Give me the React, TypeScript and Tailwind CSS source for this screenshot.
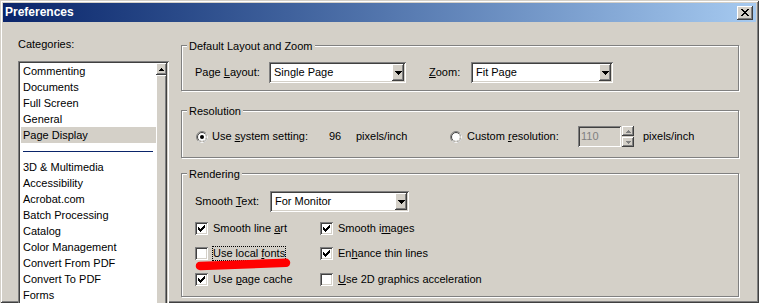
import React from "react";

// classic 3D bevels
const sunken =
  "shadow-[inset_1px_1px_0_#808080,inset_-1px_-1px_0_#ffffff,inset_2px_2px_0_#404040,inset_-2px_-2px_0_#d4d0c8]";
const raised =
  "shadow-[inset_-1px_-1px_0_#404040,inset_1px_1px_0_#ffffff,inset_-2px_-2px_0_#808080]";
const etched = "border border-[#808080] shadow-[inset_1px_1px_0_#ffffff,1px_1px_0_#ffffff]";

function DownArrow() {
  return (
    <svg width="7" height="4" viewBox="0 0 7 4" shapeRendering="crispEdges">
      <rect x="0" y="0" width="7" height="1" fill="#000" />
      <rect x="1" y="1" width="5" height="1" fill="#000" />
      <rect x="2" y="2" width="3" height="1" fill="#000" />
      <rect x="3" y="3" width="1" height="1" fill="#000" />
    </svg>
  );
}

function Combo({ w, value }: { w: string; value: string }) {
  return (
    <div className={`${w} h-[21px] bg-white ${sunken} flex items-center justify-between pl-[5px] pr-[2px] shrink-0`}>
      <span>{value}</span>
      <div className={`w-[12px] h-[17px] bg-[#d4d0c8] ${raised} flex items-center justify-center`}>
        <DownArrow />
      </div>
    </div>
  );
}

function Check({ on }: { on?: boolean }) {
  return (
    <span className={`block w-[13px] h-[13px] bg-white ${sunken} shrink-0`}>
      {on && (
        <svg width="13" height="13" viewBox="0 0 13 13" shapeRendering="crispEdges">
          <rect x="9" y="3" width="1" height="1" fill="#000" />
          <rect x="8" y="4" width="2" height="1" fill="#000" />
          <rect x="3" y="5" width="1" height="1" fill="#000" />
          <rect x="7" y="5" width="3" height="1" fill="#000" />
          <rect x="3" y="6" width="2" height="1" fill="#000" />
          <rect x="6" y="6" width="3" height="1" fill="#000" />
          <rect x="3" y="7" width="5" height="1" fill="#000" />
          <rect x="4" y="8" width="3" height="1" fill="#000" />
          <rect x="5" y="9" width="1" height="1" fill="#000" />
        </svg>
      )}
    </span>
  );
}

function Radio({ on }: { on?: boolean }) {
  return (
    <svg width="12" height="12" viewBox="0 0 12 12" className="shrink-0">
      <circle cx="6" cy="6" r="5.5" fill="none" stroke="#808080" />
      <path d="M9.89 2.11 A5.5 5.5 0 0 1 2.11 9.89" fill="none" stroke="#ffffff" />
      <circle cx="6" cy="6" r="4.5" fill="#ffffff" stroke="#404040" />
      <path d="M9.18 2.82 A4.5 4.5 0 0 1 2.82 9.18" fill="none" stroke="#d4d0c8" />
      {on && <circle cx="6" cy="6" r="2" fill="#000" />}
    </svg>
  );
}

function CheckItem({ on, children, focus }: { on?: boolean; children: React.ReactNode; focus?: boolean }) {
  return (
    <div className="w-[125px] flex items-center">
      <Check on={on} />
      <span className={`ml-[5px] whitespace-nowrap ${focus ? "outline outline-1 outline-dotted outline-black" : ""}`}>
        {children}
      </span>
    </div>
  );
}

function Group({ label, className, children }: { label: string; className: string; children: React.ReactNode }) {
  return (
    <div className={`relative ${etched} ${className}`}>
      <span className="absolute left-[5px] top-[-6px] px-[2px] bg-[#d4d0c8] whitespace-nowrap">{label}</span>
      {children}
    </div>
  );
}

const categories = ["Commenting", "Documents", "Full Screen", "General", "Page Display"];
const more = [
  "3D & Multimedia",
  "Accessibility",
  "Acrobat.com",
  "Batch Processing",
  "Catalog",
  "Color Management",
  "Convert From PDF",
  "Convert To PDF",
  "Forms",
];

export default function App() {
  return (
    <div className="w-[759px] h-[303px] overflow-hidden bg-[#d4d0c8] text-[11px] leading-[13px] text-black font-['Liberation_Sans',Arial,sans-serif] shadow-[inset_1px_1px_0_#d4d0c8,inset_-1px_-1px_0_#404040,inset_2px_2px_0_#ffffff,inset_-2px_-2px_0_#808080]">
      {/* Title bar */}
      <div className="mx-[3px] mt-[3px] h-[19px] bg-linear-to-r from-[#0a246a] to-[#a6caf0] flex items-center justify-between pl-[2px] pr-[3px]">
        <span className="text-white font-bold text-[12px]">Preferences</span>
        <div className={`w-[16px] h-[14px] bg-[#d4d0c8] ${raised} flex items-center justify-center`}>
          <svg width="8" height="7" viewBox="0 0 8 7" shapeRendering="crispEdges">
            <rect x="0" y="0" width="2" height="1" fill="#000" />
            <rect x="6" y="0" width="2" height="1" fill="#000" />
            <rect x="1" y="1" width="2" height="1" fill="#000" />
            <rect x="5" y="1" width="2" height="1" fill="#000" />
            <rect x="2" y="2" width="4" height="1" fill="#000" />
            <rect x="3" y="3" width="2" height="1" fill="#000" />
            <rect x="2" y="4" width="4" height="1" fill="#000" />
            <rect x="1" y="5" width="2" height="1" fill="#000" />
            <rect x="5" y="5" width="2" height="1" fill="#000" />
            <rect x="0" y="6" width="2" height="1" fill="#000" />
            <rect x="6" y="6" width="2" height="1" fill="#000" />
          </svg>
        </div>
      </div>

      <div className="flex pl-[18px]">
        {/* Categories */}
        <div className="w-[151px] pt-[16px] flex flex-col shrink-0">
          <span>Categories:</span>
          <div className={`mt-[10px] h-[250px] bg-white ${sunken} p-[2px] flex`}>
            <div className="flex-1 flex flex-col">
              {categories.map((c) => (
                <div
                  key={c}
                  className={`h-[16px] leading-[16px] ml-[1px] pl-[2px] whitespace-nowrap ${c === "Page Display" ? "bg-[#d4d0c8]" : ""}`}
                >
                  {c}
                </div>
              ))}
              <div className="h-[16px] pt-[8px] pl-[3px]">
                <div className="w-[130px] h-[1px] bg-[#0a246a]" />
              </div>
              {more.map((c) => (
                <div key={c} className="h-[16px] leading-[16px] ml-[1px] pl-[2px] whitespace-nowrap">
                  {c}
                </div>
              ))}
            </div>
            <div className="w-[11px] flex flex-col">
              <div className={`h-[12px] bg-[#d4d0c8] ${raised} flex items-center justify-center`}>
                <svg width="5" height="3" viewBox="0 0 5 3" shapeRendering="crispEdges">
                  <rect x="2" y="0" width="1" height="1" fill="#000" />
                  <rect x="1" y="1" width="3" height="1" fill="#000" />
                  <rect x="0" y="2" width="5" height="1" fill="#000" />
                </svg>
              </div>
              <div className={`flex-1 bg-[#d4d0c8] ${raised}`} />
            </div>
          </div>
        </div>

        {/* Settings */}
        <div className="ml-[12px] w-[558px] pt-[23px] flex flex-col">
          <Group label="Default Layout and Zoom" className="h-[46px] pt-[16px] pl-[13px]">
            <div className="flex items-center h-[21px]">
              <span className="w-[74px] shrink-0">
                Page <u>L</u>ayout:
              </span>
              <Combo w="w-[137px]" value="Single Page" />
              <span className="ml-[23px] w-[42px] shrink-0">
                <u>Z</u>oom:
              </span>
              <Combo w="w-[142px]" value="Fit Page" />
            </div>
          </Group>

          <Group label="Resolution" className="mt-[19px] h-[48px] pt-[15px] pl-[14px]">
            <div className="flex items-center h-[21px] whitespace-nowrap">
              <Radio on />
              <span className="ml-[4px] w-[117px] shrink-0">
                Use <u>s</u>ystem setting:
              </span>
              <span className="w-[27px] shrink-0">96</span>
              <span className="w-[94px] shrink-0">pixels/inch</span>
              <Radio />
              <span className="ml-[5px] w-[111px] shrink-0">
                Custom <u>r</u>esolution:
              </span>
              <div className={`w-[43px] h-[21px] bg-[#d4d0c8] ${sunken} flex items-center pl-[3px] text-[#808080] shrink-0`}>
                110
              </div>
              <div className="ml-[1px] w-[12px] h-[21px] flex flex-col shrink-0">
                <div className={`h-[10px] bg-[#d4d0c8] ${raised} flex items-center justify-center`}>
                  <svg width="5" height="3" viewBox="0 0 5 3" shapeRendering="crispEdges">
                    <rect x="2" y="0" width="1" height="1" fill="#808080" />
                    <rect x="1" y="1" width="3" height="1" fill="#808080" />
                    <rect x="0" y="2" width="5" height="1" fill="#808080" />
                  </svg>
                </div>
                <div className={`mt-[1px] h-[10px] bg-[#d4d0c8] ${raised} flex items-center justify-center`}>
                  <svg width="5" height="3" viewBox="0 0 5 3" shapeRendering="crispEdges">
                    <rect x="0" y="0" width="5" height="1" fill="#808080" />
                    <rect x="1" y="1" width="3" height="1" fill="#808080" />
                    <rect x="2" y="2" width="1" height="1" fill="#808080" />
                  </svg>
                </div>
              </div>
              <span className="ml-[9px]">pixels/inch</span>
            </div>
          </Group>

          <Group label="Rendering" className="mt-[15px] h-[124px] pt-[17px] pl-[13px]">
            <div className="flex items-center h-[21px]">
              <span className="w-[75px] shrink-0">
                Smooth <u>T</u>ext:
              </span>
              <Combo w="w-[139px]" value="For Monitor" />
            </div>
            <div className="mt-[10px] h-[13px] flex">
              <CheckItem on>
                Smooth line <u>a</u>rt
              </CheckItem>
              <CheckItem on>
                Smooth i<u>m</u>ages
              </CheckItem>
            </div>
            <div className="mt-[12px] h-[13px] flex">
              <CheckItem focus>
                Use local <u>f</u>onts
              </CheckItem>
              <CheckItem on>
                En<u>h</u>ance thin lines
              </CheckItem>
            </div>
            <div className="mt-[13px] h-[13px] flex">
              <CheckItem on>
                Use <u>p</u>age cache
              </CheckItem>
              <CheckItem>
                <u>U</u>se 2D graphics acceleration
              </CheckItem>
            </div>

            {/* red hand-drawn mark */}
            <svg className="absolute left-[13px] top-[84px]" width="98" height="14" viewBox="0 0 98 14">
              <path d="M5 8 Q48 6.5 91 4.8" fill="none" stroke="#ff0000" strokeWidth="8.5" strokeLinecap="round" />
            </svg>
          </Group>
        </div>
      </div>
    </div>
  );
}
